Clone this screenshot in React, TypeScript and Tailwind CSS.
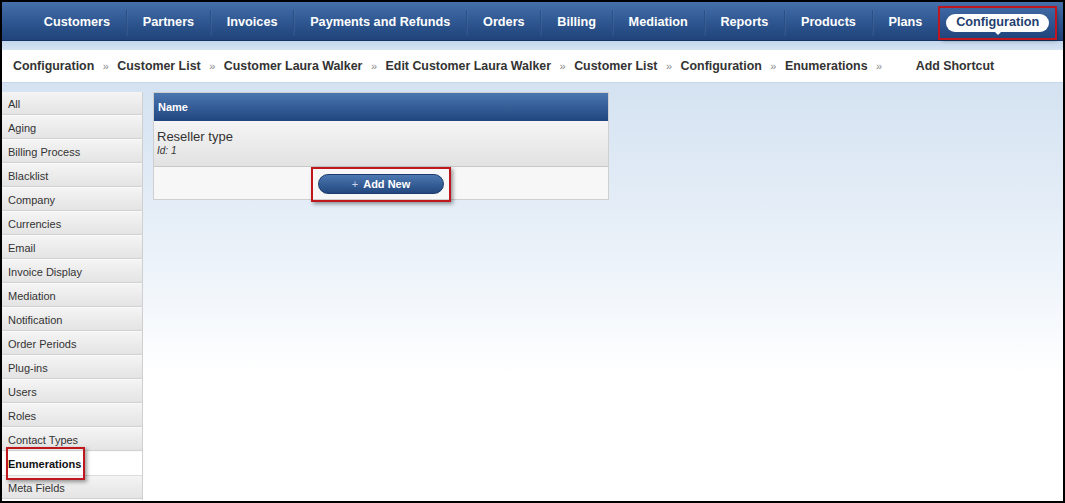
import React from 'react';

const navItems = [
  'Customers',
  'Partners',
  'Invoices',
  'Payments and Refunds',
  'Orders',
  'Billing',
  'Mediation',
  'Reports',
  'Products',
  'Plans',
];

const crumbs = [
  'Configuration',
  'Customer List',
  'Customer Laura Walker',
  'Edit Customer Laura Walker',
  'Customer List',
  'Configuration',
  'Enumerations',
];

const sideItems = [
  'All',
  'Aging',
  'Billing Process',
  'Blacklist',
  'Company',
  'Currencies',
  'Email',
  'Invoice Display',
  'Mediation',
  'Notification',
  'Order Periods',
  'Plug-ins',
  'Users',
  'Roles',
  'Contact Types',
  'Enumerations',
  'Meta Fields',
];

export default function App() {
  return (
    <div className="w-[1065px] h-[503px] overflow-hidden border-2 border-black bg-white font-['Liberation_Sans',Arial,sans-serif] flex flex-col">
      {/* top nav */}
      <div className="h-[39px] shrink-0 flex items-center whitespace-nowrap pl-[26px] pt-[2px] bg-gradient-to-b from-[#4670aa] via-[#2f5791] to-[#1f4279] shadow-[inset_0_-1px_0_#163463]">
        {navItems.map((n, i) => (
          <React.Fragment key={n}>
            {i > 0 && (
              <div className="w-px h-[26px] shrink-0 bg-[#2a4e86] shadow-[1px_0_0_rgba(255,255,255,0.06)]" />
            )}
            <span className="shrink-0 px-[15.8px] text-[12.7px] font-bold text-white leading-none">
              {n}
            </span>
          </React.Fragment>
        ))}
        <div className="w-px h-[26px] shrink-0 bg-[#2a4e86]" />
        <div className="relative shrink-0 ml-px p-[6px] ring-2 ring-[#c0171f] shadow-[2px_2px_4px_rgba(0,0,0,0.45)]">
          <div className="relative rounded-full bg-white px-[10px] h-[18px] flex items-center text-[12.7px] font-bold text-[#1f3f70] leading-none">
            Configuration
            <span className="absolute left-1/2 -translate-x-1/2 top-[17px] w-0 h-0 border-l-[4px] border-r-[4px] border-t-[4px] border-l-transparent border-r-transparent border-t-white" />
          </div>
        </div>
      </div>

      {/* strip */}
      <div className="h-[9px] shrink-0 bg-gradient-to-b from-[#c4d6ec] to-[#d6e4f3]" />

      {/* breadcrumbs */}
      <div className="h-[33px] shrink-0 bg-white flex items-center whitespace-nowrap pl-[11px] border-b border-[#c5d6ea] text-[12.4px] font-bold text-[#333]">
        {crumbs.map((c, i) => (
          <React.Fragment key={i}>
            <span>{c}</span>
            <span className="mx-[8.5px] text-[#8a8a8a] text-[11px] font-normal">»</span>
          </React.Fragment>
        ))}
        <span className="ml-[25px]">Add Shortcut</span>
      </div>

      {/* content */}
      <div className="flex-1 flex items-start gap-[10px] pt-[9px] bg-gradient-to-b from-[#d4e2f1] via-[#eaf1f9] via-40% to-white to-70%">
        <div className="w-[141px] shrink-0 border-r border-[#cfcfcf] flex flex-col">
          {sideItems.map((s) => {
            const active = s === 'Enumerations';
            return (
              <div
                key={s}
                className={
                  active
                    ? 'relative h-[24px] flex items-center pl-[6px] pt-[2px] bg-white border-b border-[#dcdcdc] text-[11px] font-bold text-[#111]'
                    : 'h-[24px] flex items-center pl-[6px] pt-[2px] bg-gradient-to-b from-[#f4f4f4] to-[#e3e3e3] border-b border-[#fafafa] shadow-[inset_0_-1px_0_#d2d2d2] text-[11px] text-[#333]'
                }
              >
                {active && (
                  <div className="absolute left-[4px] top-[-5px] w-[79px] h-[33px] border-2 border-[#c0171f] shadow-[2px_2px_4px_rgba(0,0,0,0.4)]" />
                )}
                {s}
              </div>
            );
          })}
        </div>

        <div className="w-[456px] border border-[#cfcfcf] bg-white">
          <div className="h-[28px] flex items-center pl-[4px] bg-gradient-to-b from-[#4a76b0] to-[#21467f] text-[11px] font-bold text-white">
            Name
          </div>
          <div className="h-[46px] pl-[3px] pt-[8px] bg-gradient-to-b from-[#f5f5f5] to-[#e2e2e2] border-b border-[#c9c9c9] text-[#333]">
            <div className="text-[13px] leading-[15px]">Reseller type</div>
            <div className="text-[10px] italic leading-[14px]">Id: 1</div>
          </div>
          <div className="h-[32px] bg-[#f7f7f7] flex justify-center pt-[7px]">
            <div className="relative">
              <div className="absolute left-[-7px] top-[-7px] w-[140px] h-[35px] border-2 border-[#c0171f] shadow-[2px_2px_4px_rgba(0,0,0,0.4)]" />
              <div className="relative w-[126px] h-[20px] rounded-full bg-gradient-to-b from-[#4d78b2] to-[#23487f] border border-[#1d3c6b] flex items-center justify-center text-[11px] font-bold text-white">
                <span className="text-[#c8d6ea] font-normal mr-[5px]">+</span>
                Add New
              </div>
            </div>
          </div>
        </div>
      </div>
    </div>
  );
}
